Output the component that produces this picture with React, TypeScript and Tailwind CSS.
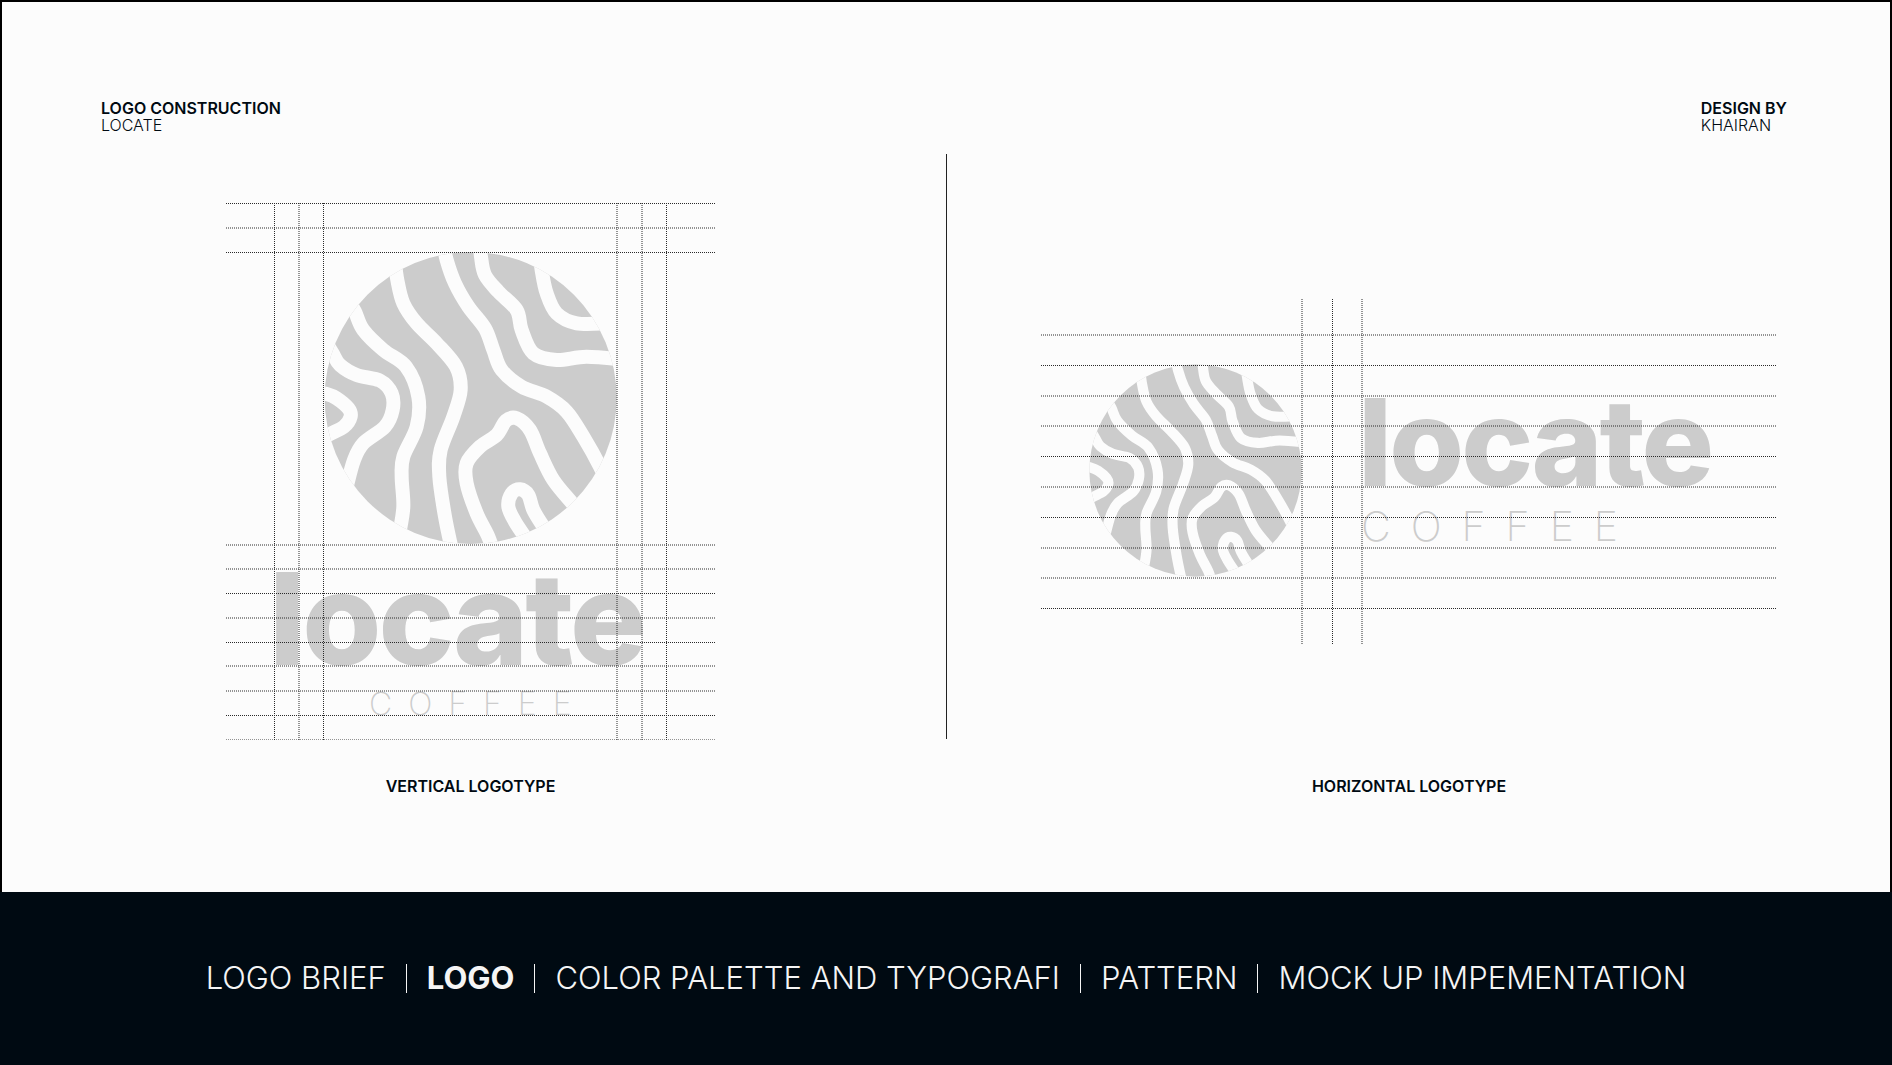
const bands: number[][][] = [
  // top right corner
  [[655, -20], [665, 60], [680, 130], [710, 190], [770, 220], [860, 220]],
  [[478, -40], [483, 20], [495, 75], [535, 125], [590, 180], [605, 240], [640, 310], [710, 330], [800, 320], [920, 330]],
  [[368, -30], [380, 30], [405, 100], [445, 170], [495, 235], [520, 300], [545, 360], [605, 410], [680, 440], [740, 485], [790, 560], [840, 650], [880, 740]],
  [[224, 30], [232, 90], [250, 160], [290, 220], [350, 280], [408, 350], [422, 420], [400, 500], [362, 600], [358, 680], [375, 800], [398, 910]],
  [[85, 150], [105, 185], [130, 240], [190, 300], [258, 350], [295, 440], [290, 530], [250, 620], [245, 680], [250, 770], [238, 850]],
  [[20, 280], [38, 310], [60, 345], [110, 375], [180, 392], [215, 430], [218, 480], [195, 530], [130, 580], [102, 630], [80, 710]],
  [[-20, 425], [20, 432], [50, 445], [85, 475], [92, 500], [72, 530], [28, 553], [-10, 575]],
  // blob in the lower part
  [[525, 920], [505, 860], [470, 790], [440, 700], [440, 640], [480, 590], [530, 555], [558, 512], [590, 505], [630, 540], [660, 610], [700, 690], [757, 760], [790, 800]],
  // small hook
  [[625, 875], [585, 815], [565, 770], [575, 730], [600, 718], [625, 735], [640, 780], [670, 830], [690, 860]],
];

function toPath(p: number[][]) {
  let d = `M${p[0][0]} ${p[0][1]}`;
  for (let i = 0; i < p.length - 1; i++) {
    const a = p[Math.max(i - 1, 0)];
    const b = p[i];
    const c = p[i + 1];
    const e = p[Math.min(i + 2, p.length - 1)];
    d += `C${b[0] + (c[0] - a[0]) / 6} ${b[1] + (c[1] - a[1]) / 6} ${c[0] - (e[0] - b[0]) / 6} ${c[1] - (e[1] - b[1]) / 6} ${c[0]} ${c[1]}`;
  }
  return d;
}

function CoffeeMark({ id, className }: { id: string; className: string }) {
  return (
    <svg viewBox="0 0 900 900" className={className}>
      <clipPath id={id}>
        <circle cx="452" cy="444" r="438" />
      </clipPath>
      <g clipPath={`url(#${id})`}>
        <rect width="900" height="900" fill="#cccccc" />
        {bands.map((b, i) => (
          <path key={i} d={toPath(b)} fill="none" stroke="#fcfcfc" strokeWidth="42" />
        ))}
      </g>
    </svg>
  );
}

function Guides({ box, hs, vs }: { box: number[]; hs: number[]; vs: number[] }) {
  const [x, y, w, h] = box;
  return (
    <svg viewBox={box.join(" ")} className="absolute inset-0 w-full h-full">
      {hs.map((v) => (
        <line key={v} x1={x} x2={x + w} y1={v} y2={v} stroke="#2a2a2a" strokeDasharray="1 1" />
      ))}
      {vs.map((v) => (
        <line key={v} x1={v} x2={v} y1={y} y2={y + h} stroke="#2a2a2a" strokeDasharray="1 1" />
      ))}
    </svg>
  );
}

const navItems = ["LOGO BRIEF", "LOGO", "COLOR PALETTE AND TYPOGRAFI", "PATTERN", "MOCK UP IMPEMENTATION"];

export default function App() {
  return (
    <div className="flex flex-col w-[1892px] h-[1065px] bg-[#fcfcfc] font-['Inter',sans-serif] text-[#000a12] overflow-hidden">
      <section className="h-[892px] border-x-2 border-t-2 border-black">
        <header className="flex justify-between pt-[98px] pl-[99px] pr-[103px] text-base leading-[17px]">
          <div>
            <h1 className="font-semibold">LOGO CONSTRUCTION</h1>
            <p className="font-light">LOCATE</p>
          </div>
          <div>
            <h2 className="font-semibold">DESIGN BY</h2>
            <p className="font-light">KHAIRAN</p>
          </div>
        </header>

        <div className="flex items-start mt-[20px]">
          <figure className="flex flex-col items-center ml-[224px] mt-[49px] w-[489px]">
            <div className="relative w-[489px] h-[537px]">
              <CoffeeMark id="mark-v" className="absolute left-[94px] top-[47px] w-[300px] h-[300px]" />
              <span className="absolute left-[43px] top-[352px] text-[128px] leading-none font-extrabold text-[#cccccc] tracking-[-3px]">
                locate
              </span>
              <span className="absolute left-[143px] top-[485px] text-[32px] leading-none font-extralight text-[#cccccc] tracking-[16px]">
                COFFEE
              </span>
              <Guides
                box={[226, 203, 489, 537]}
                hs={[203.5, 228, 252.5, 545, 569, 593.5, 618, 642.5, 666, 691, 715.5, 740]}
                vs={[274.5, 299, 323.5, 617, 642, 666.5]}
              />
            </div>
            <figcaption className="mt-[38px] text-base leading-[17px] font-semibold">VERTICAL LOGOTYPE</figcaption>
          </figure>

          <div className="ml-[231px] w-px h-[585px] bg-[#222222]" />

          <figure className="flex flex-col items-center ml-[94px] mt-[145px] w-[736px]">
            <div className="relative w-[736px] h-[345px]">
              <CoffeeMark id="mark-h" className="absolute left-[45px] top-[64px] w-[218px] h-[218px]" />
              <span className="absolute left-[317px] top-[83px] text-[121px] leading-none font-extrabold text-[#cccccc] tracking-[-3px]">
                locate
              </span>
              <span className="absolute left-[320px] top-[207px] text-[41px] leading-none font-extralight text-[#cccccc] tracking-[20px]">
                COFFEE
              </span>
              <Guides
                box={[1041, 299, 736, 345]}
                hs={[335, 365.5, 396, 426, 456.5, 487, 517.5, 548, 578, 608.5]}
                vs={[1302, 1332.5, 1362]}
              />
            </div>
            <figcaption className="mt-[134px] text-base leading-[17px] font-semibold">HORIZONTAL LOGOTYPE</figcaption>
          </figure>
        </div>
      </section>

      <footer className="flex-1 flex items-center justify-center gap-[20px] bg-[#000a12] text-[#f5f5f5] text-[31px] font-light">
        {navItems.map((item, i) => (
          <div key={item} className="flex items-center gap-[20px]">
            {i > 0 && <span className="w-px h-[29px] bg-[#f5f5f5]" />}
            <span className={item === "LOGO" ? "font-bold" : ""}>{item}</span>
          </div>
        ))}
      </footer>
    </div>
  );
}
